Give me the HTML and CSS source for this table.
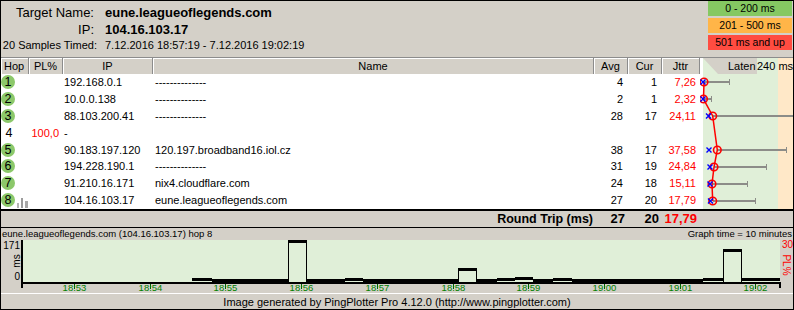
FILE: index.html
```html
<!DOCTYPE html>
<html>
<head>
<meta charset="utf-8">
<link rel="stylesheet" href="styles.css">
</head>
<body>
<div class="frame">
  <div class="info">
    <div class="meta">
      <div class="lbl l1">Target Name:</div><div class="val v1">eune.leagueoflegends.com</div>
      <div class="lbl l2">IP:</div><div class="val v2">104.16.103.17</div>
      <div class="lbl l3">20 Samples Timed:</div><div class="val v3">7.12.2016 18:57:19 - 7.12.2016 19:02:19</div>
    </div>
    <div class="legend">
      <div class="lg g">0 - 200 ms</div>
      <div class="lg o">201 - 500 ms</div>
      <div class="lg r">501 ms and up</div>
    </div>
  </div>

  <div class="tbl">
    <div class="left">
      <div class="hdr">
        <div class="th hopc">Hop</div>
        <div class="th">PL%</div>
        <div class="th">IP</div>
        <div class="th">Name</div>
        <div class="th">Avg</div>
        <div class="th">Cur</div>
        <div class="th">Jttr</div>
      </div>
      <div class="body">
        <div class="row"><div class="c"><span class="badge">1</span></div><div class="c pl"></div><div class="c ip">192.168.0.1</div><div class="c nm">--------------</div><div class="c num">4</div><div class="c num">1</div><div class="c jt">7,26</div></div>
        <div class="row"><div class="c"><span class="badge">2</span></div><div class="c pl"></div><div class="c ip">10.0.0.138</div><div class="c nm">--------------</div><div class="c num">2</div><div class="c num">1</div><div class="c jt">2,32</div></div>
        <div class="row"><div class="c"><span class="badge">3</span></div><div class="c pl"></div><div class="c ip">88.103.200.41</div><div class="c nm">--------------</div><div class="c num">28</div><div class="c num">17</div><div class="c jt">24,11</div></div>
        <div class="row"><div class="c"><span class="badge plain">4</span></div><div class="c pl">100,0</div><div class="c ip">-</div><div class="c nm"></div><div class="c num"></div><div class="c num"></div><div class="c jt"></div></div>
        <div class="row"><div class="c"><span class="badge">5</span></div><div class="c pl"></div><div class="c ip">90.183.197.120</div><div class="c nm">120.197.broadband16.iol.cz</div><div class="c num">38</div><div class="c num">17</div><div class="c jt">37,58</div></div>
        <div class="row"><div class="c"><span class="badge">6</span></div><div class="c pl"></div><div class="c ip">194.228.190.1</div><div class="c nm">--------------</div><div class="c num">31</div><div class="c num">19</div><div class="c jt">24,84</div></div>
        <div class="row"><div class="c"><span class="badge">7</span></div><div class="c pl"></div><div class="c ip">91.210.16.171</div><div class="c nm">nix4.cloudflare.com</div><div class="c num">24</div><div class="c num">18</div><div class="c jt">15,11</div></div>
        <div class="row"><div class="c hop8"><span class="badge">8</span><svg class="bars" width="11" height="10" viewBox="0 0 11 10"><rect x="0" y="5" width="2" height="5" fill="#b4b4b4"/><rect x="4" y="0" width="2" height="10" fill="#9c9c9c"/><rect x="8" y="3" width="3" height="7" fill="#a8a8a8"/></svg></div><div class="c pl"></div><div class="c ip">104.16.103.17</div><div class="c nm">eune.leagueoflegends.com</div><div class="c num">27</div><div class="c num">20</div><div class="c jt">17,79</div></div>
      </div>
    </div>
    <div class="latcol">
      <svg class="lat" width="93" height="151" viewBox="700 58 93 151">
        <rect x="700" y="58" width="3" height="151" fill="#ffffff"/>
        <rect x="703" y="58" width="75" height="151" fill="#e0efd8"/>
        <rect x="778" y="58" width="15" height="151" fill="#ffe8c8"/>
        <g stroke="#8c8c88" stroke-width="2">
          <line x1="704" y1="82" x2="729" y2="82"/>
          <line x1="703" y1="99" x2="711" y2="99"/>
          <line x1="713" y1="116" x2="793" y2="116"/>
          <line x1="717" y1="150" x2="786" y2="150"/>
          <line x1="714" y1="167" x2="766" y2="167"/>
          <line x1="712" y1="184" x2="747" y2="184"/>
          <line x1="713" y1="201" x2="755" y2="201"/>
        </g>
        <g stroke="#8c8c88" stroke-width="1">
          <line x1="729.5" y1="79" x2="729.5" y2="85"/>
          <line x1="711.5" y1="96" x2="711.5" y2="102"/>
          <line x1="786.5" y1="147" x2="786.5" y2="153"/>
          <line x1="766.5" y1="164" x2="766.5" y2="170"/>
          <line x1="747.5" y1="181" x2="747.5" y2="187"/>
          <line x1="755.5" y1="198" x2="755.5" y2="204"/>
        </g>
        <polyline points="704,82 703.5,99 712.7,116 717.3,150 714,167 712,184 712.7,201" fill="none" stroke="#ff0000" stroke-width="1.5"/>
        <g fill="none" stroke="#ff0000" stroke-width="1.6">
          <circle cx="704" cy="82" r="3.8"/>
          <circle cx="703.5" cy="99" r="3.8"/>
          <circle cx="712.7" cy="116" r="3.8"/>
          <circle cx="717.3" cy="150" r="3.8"/>
          <circle cx="714" cy="167" r="3.8"/>
          <circle cx="712" cy="184" r="3.8"/>
          <circle cx="712.7" cy="201" r="3.8"/>
        </g>
        <g stroke="#0000ff" stroke-width="1.4">
          <path d="M700.5 79.5 l5 5 M705.5 79.5 l-5 5"/>
          <path d="M700.5 96.5 l5 5 M705.5 96.5 l-5 5"/>
          <path d="M706 113.5 l5 5 M711 113.5 l-5 5"/>
          <path d="M706.5 147.5 l5 5 M711.5 147.5 l-5 5"/>
          <path d="M707.5 164.5 l5 5 M712.5 164.5 l-5 5"/>
          <path d="M707.5 181.5 l5 5 M712.5 181.5 l-5 5"/>
          <path d="M708 198.5 l5 5 M713 198.5 l-5 5"/>
        </g>
      </svg>
      <div class="lath"><span>Laten</span></div>
      <div class="scale">240 ms</div>
    </div>
  </div>

  <div class="rt">
    <div class="rtl">Round Trip (ms)</div>
    <div class="rtn">27</div>
    <div class="rtn">20</div>
    <div class="rtj">17,79</div>
    <div></div>
  </div>

  <div class="gtitle">
    <span>eune.leagueoflegends.com (104.16.103.17) hop 8</span>
    <span>Graph time = 10 minutes</span>
  </div>

  <svg class="chart" width="792" height="53" viewBox="1 240 792 53">
    <rect x="23" y="240" width="757" height="42" fill="#e0efd8"/>
    <rect x="21" y="240" width="2" height="48" fill="#000"/>
    <rect x="21" y="282" width="760" height="2" fill="#000"/>
    <rect x="779" y="282" width="2" height="6" fill="#000"/>
    <g fill="#000">
      <rect x="192" y="278" width="20" height="3"/>
      <rect x="212" y="279" width="76" height="3"/>
      <rect x="288" y="240" width="19" height="3"/>
      <rect x="307" y="279" width="38" height="3"/>
      <rect x="345" y="278" width="18" height="3"/>
      <rect x="363" y="279" width="95" height="3"/>
      <rect x="458" y="268" width="19" height="3"/>
      <rect x="477" y="279" width="20" height="3"/>
      <rect x="497" y="278" width="18" height="3"/>
      <rect x="515" y="277" width="18" height="3"/>
      <rect x="533" y="279" width="20" height="3"/>
      <rect x="553" y="278" width="19" height="3"/>
      <rect x="572" y="279" width="131" height="3"/>
      <rect x="703" y="278" width="20" height="3"/>
      <rect x="723" y="249" width="19" height="3"/>
      <rect x="742" y="278" width="38" height="3"/>
      <rect x="288" y="240" width="1" height="42"/>
      <rect x="306" y="240" width="1" height="42"/>
      <rect x="458" y="268" width="1" height="14"/>
      <rect x="476" y="268" width="1" height="14"/>
      <rect x="723" y="249" width="1" height="33"/>
      <rect x="741" y="249" width="1" height="33"/>
    </g>
    <g class="ylab">
      <text x="20" y="249" text-anchor="end">171</text>
      <text x="20" y="261" text-anchor="middle" transform="rotate(-90 20 261)">ms</text>
      <text x="20" y="280" text-anchor="end">0</text>
    </g>
    <g class="plab">
      <text x="782" y="248">30</text>
      <text x="783" y="265" text-anchor="middle" transform="rotate(90 783 265)">PL%</text>
    </g>
    <g stroke="#006400" stroke-width="1">
      <line x1="74.5" y1="284" x2="74.5" y2="289"/>
      <line x1="150.5" y1="284" x2="150.5" y2="289"/>
      <line x1="225.5" y1="284" x2="225.5" y2="289"/>
      <line x1="301.5" y1="284" x2="301.5" y2="289"/>
      <line x1="377.5" y1="284" x2="377.5" y2="289"/>
      <line x1="453.5" y1="284" x2="453.5" y2="289"/>
      <line x1="528.5" y1="284" x2="528.5" y2="289"/>
      <line x1="604.5" y1="284" x2="604.5" y2="289"/>
      <line x1="680.5" y1="284" x2="680.5" y2="289"/>
      <line x1="755.5" y1="284" x2="755.5" y2="289"/>
    </g>
    <g class="tlab" text-anchor="middle">
      <text x="74.5" y="291">18:53</text>
      <text x="150.5" y="291">18:54</text>
      <text x="225.5" y="291">18:55</text>
      <text x="301.5" y="291">18:56</text>
      <text x="377.5" y="291">18:57</text>
      <text x="453.5" y="291">18:58</text>
      <text x="528.5" y="291">18:59</text>
      <text x="604.5" y="291">19:00</text>
      <text x="680.5" y="291">19:01</text>
      <text x="755.5" y="291">19:02</text>
    </g>
  </svg>

  <div class="footer">Image generated by PingPlotter Pro 4.12.0 (http://www.pingplotter.com)</div>
</div>
</body>
</html>
```

FILE: styles.css
```css
* { box-sizing: border-box; }
html, body { margin: 0; padding: 0; background: #d4d0c8; }
body { font-family: "Liberation Sans", Arial, sans-serif; color: #000; }

.frame {
  width: 794px;
  height: 310px;
  border: 1px solid #000;
  background: #d4d0c8;
  display: flex;
  flex-direction: column;
  overflow: hidden;
}

/* ---------- info header ---------- */
.info {
  height: 56px;
  display: flex;
  justify-content: space-between;
  align-items: flex-start;
}
.meta {
  display: grid;
  grid-template-columns: 96px auto;
  column-gap: 8px;
  padding-top: 3px;
  grid-template-rows: 18px 16px 14px;
}
.lbl { text-align: right; white-space: nowrap; }
.val { white-space: nowrap; }
.l1, .v1 { font-size: 13px; line-height: 18px; }
.l2, .v2 { font-size: 13px; line-height: 16px; }
.v1, .v2 { font-weight: bold; }
.l3, .v3 { font-size: 11px; line-height: 14px; }
.l1, .l2 { padding-right: 3px; }

.legend {
  width: 84px;
  margin-right: 1px;
  display: flex;
  flex-direction: column;
  gap: 2px;
}
.lg {
  height: 15px;
  font-size: 10.5px;
  line-height: 15px;
  text-align: center;
  white-space: nowrap;
}
.lg.g { background: #85c862; }
.lg.o { background: #ffb548; }
.lg.r { background: #ff4c41; }

/* ---------- table ---------- */
.tbl {
  display: flex;
  border-top: 1px solid #8c8c8c;
  border-bottom: 2px solid #000;
  height: 154px;
}
.left { width: 699px; display: flex; flex-direction: column; }
.hdr {
  height: 16px;
  display: grid;
  grid-template-columns: 28px 34px 90px 441px 34px 34px 38px;
}
.th {
  background: #d4d0c8;
  border-right: 1px solid #8c8c8c;
  box-shadow: inset 1px 1px 0 #fff;
  font-size: 11px;
  line-height: 16px;
  text-align: center;
  white-space: nowrap;
  overflow: hidden;
}
.th.hopc { text-align: left; padding-left: 3px; }

.body {
  height: 135px;
  background: #fff;
  display: flex;
  flex-direction: column;
}
.row {
  height: 16.875px;
  display: grid;
  grid-template-columns: 28px 34px 90px 441px 34px 34px 38px;
  font-size: 11px;
  line-height: 17px;
  white-space: nowrap;
}
.c { overflow: hidden; }
.badge {
  display: inline-block;
  width: 14px;
  height: 14px;
  margin-top: 1px;
  border-radius: 50%;
  background: #8cc86a;
  font-size: 12.5px;
  line-height: 14px;
  text-align: center;
  vertical-align: top;
}
.badge.plain { background: transparent; margin-left: 1px; }
.hop8 { display: flex; align-items: flex-start; gap: 2px; }
.bars { margin-top: 6px; }
.pl { color: #ff0000; text-align: right; padding-right: 4px; }
.ip { padding-left: 1px; }
.nm { padding-left: 2px; }
.num { text-align: right; padding-right: 5px; }
.jt { text-align: right; padding-right: 4px; color: #ff0000; }

.latcol { width: 93px; position: relative; }
.lat { display: block; }
.lath {
  position: absolute;
  left: 0;
  top: 0;
  width: 57px;
  height: 16px;
  background: #d4d0c8;
  clip-path: polygon(0 0, 100% 0, 100% 100%, 18px 100%, 3px 0);
  font-size: 11px;
  line-height: 16px;
  white-space: nowrap;
}
.lath span { display: block; padding-left: 28px; }
.scale {
  position: absolute;
  left: 57px;
  top: 0;
  font-size: 11px;
  line-height: 17px;
  white-space: nowrap;
}

/* ---------- round trip ---------- */
.rt {
  height: 17px;
  border-bottom: 1px solid #000;
  display: grid;
  grid-template-columns: 593px 34px 34px 38px 93px;
  font-weight: bold;
  line-height: 16px;
  white-space: nowrap;
}
.rtl { font-size: 12.5px; text-align: right; padding-right: 1px; }
.rtn { font-size: 13px; text-align: right; padding-right: 3px; }
.rtj { font-size: 13px; text-align: right; padding-right: 3px; color: #ff0000; }

/* ---------- graph ---------- */
.gtitle {
  height: 12px;
  display: flex;
  justify-content: space-between;
  padding: 0 1px 0 1px;
  font-size: 9.5px;
  line-height: 12px;
  white-space: nowrap;
}
.chart { display: block; }
.chart text { font-family: "Liberation Sans", Arial, sans-serif; }
.ylab { font-size: 10px; fill: #000; }
.plab { font-size: 10px; fill: #ff0000; }
.tlab { font-size: 9.5px; fill: #008000; }

.footer {
  height: 16px;
  border-top: 1px solid #fff;
  font-size: 11px;
  line-height: 17px;
  text-align: center;
  white-space: nowrap;
  overflow: hidden;
}
```
